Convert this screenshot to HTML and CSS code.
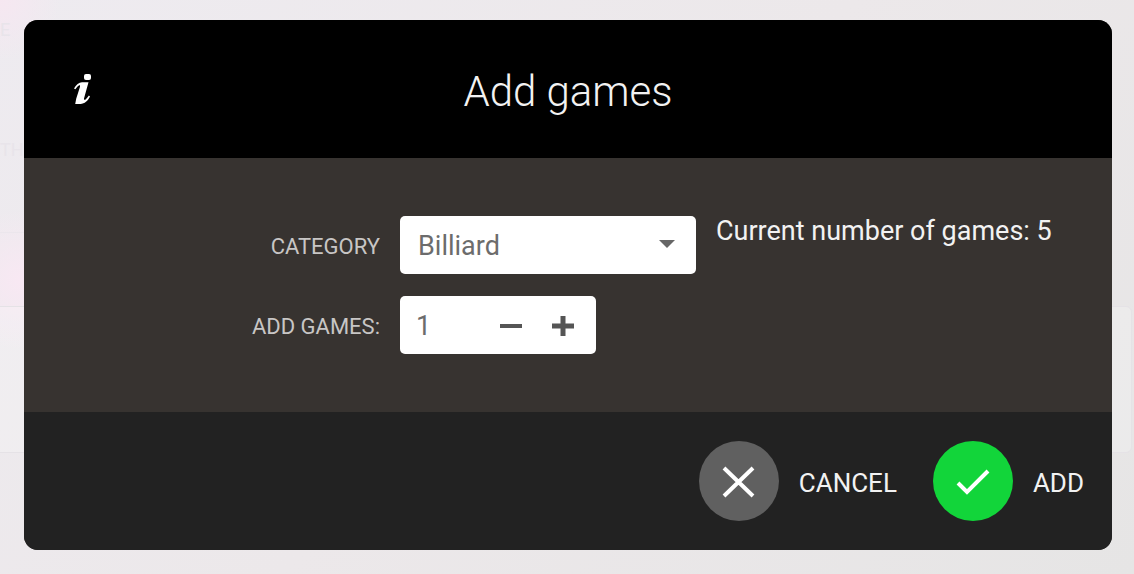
FILE: index.html
```html
<!DOCTYPE html>
<html lang="en">
<head>
  <meta charset="UTF-8" />
  <meta name="viewport" content="width=device-width, initial-scale=1.0" />
  <title>Add games</title>
  <link rel="stylesheet" href="styles.css">
</head>
<body>
  <div class="backdrop" aria-hidden="true">
    <span class="ghost">E</span>
    <span class="ghost">TH</span>
    <div class="ghost-row"></div>
    <div class="ghost-card"></div>
  </div>

  <form class="modal" role="dialog" aria-labelledby="modal-title">
    <header class="modal-header">
      <svg class="info-icon" viewBox="0 0 18 32" aria-hidden="true">
        <rect x="10" y="1" width="7" height="6" rx="2" />
        <path d="M0 15.5C2 11.5 5 9.5 8 9.2H14.5L10 25.5C9.8 27 10.6 27.2 11.6 26.4C12.9 25.4 13.9 24 14.9 22.6L16 23.6C14 28 10.5 31 6.5 31H1.2L2.2 25.8L6 13.8C6.3 12.4 5.8 12 4.8 12.5C3.4 13.4 2.4 14.8 1.4 16.2Z" />
      </svg>
      <h1 class="modal-title" id="modal-title">Add games</h1>
    </header>

    <div class="modal-body">
      <label class="label" for="category">CATEGORY</label>
      <div class="select">
        <select id="category">
          <option>Billiard</option>
        </select>
        <svg class="select-arrow" viewBox="0 0 16 8" aria-hidden="true"><path d="M0 0H16L8 8Z" /></svg>
      </div>
      <p class="current">Current number of games: 5</p>

      <label class="label" for="count">ADD GAMES:</label>
      <div class="stepper">
        <input id="count" type="number" min="1" value="1">
        <button type="button" aria-label="Remove one" onclick="count.stepDown()">
          <svg viewBox="0 0 22 22"><path d="M0 11H22" stroke-width="4" /></svg>
        </button>
        <button type="button" aria-label="Add one" onclick="count.stepUp()">
          <svg viewBox="0 0 22 22"><path d="M0 11H22M11 1V21" stroke-width="5" /></svg>
        </button>
      </div>
    </div>

    <footer class="modal-footer">
      <button class="action" type="button">
        <span class="circle cancel">
          <svg viewBox="0 0 80 80"><path d="M25 27L54 55M54 27L25 55" stroke-width="4" /></svg>
        </span>
        <span class="action-text">CANCEL</span>
      </button>
      <button class="action" type="button">
        <span class="circle add">
          <svg viewBox="0 0 80 80"><path d="M25 42L34 51L55 30" stroke-width="4" /></svg>
        </span>
        <span class="action-text">ADD</span>
      </button>
    </footer>
  </form>
</body>
</html>
```
FILE: styles.css
```css
* {
  box-sizing: border-box;
}
body {
  margin: 0;
  min-height: 100vh;
  padding: 20px 22px 24px 24px;
  font-family: Roboto, "Liberation Sans", sans-serif;
  background:
    radial-gradient(circle at 0 0, #f6e7f1, transparent 60px),
    radial-gradient(circle at 20px 280px, #f8e8f3, transparent 70px),
    linear-gradient(135deg, #eeebf0, #ece8ea 50%, #e6e5e5);
}

/* page behind the dialog */
.backdrop {
  position: absolute;
  inset: 0;
  overflow: hidden;
}
.ghost {
  position: absolute;
  top: 20px;
  left: 0;
  font-size: 18px;
  line-height: 20px;
  color: #e8e4ea;
}
.ghost + .ghost {
  top: 140px;
}
.ghost-row {
  position: absolute;
  top: 232px;
  left: 0;
  width: 50%;
  height: 75px;
  border-top: 1px solid #ebe6ec;
}
.ghost-card {
  position: absolute;
  top: 306px;
  left: -10px;
  right: 2px;
  height: 147px;
  border: 1px solid #e5e2e6;
  border-radius: 6px;
  background: rgba(255, 255, 255, 0.2);
}

.modal {
  position: relative;
  border-radius: 14px;
  overflow: hidden;
  color: #f2f2f2;
  background: #373330;
}
.modal-header {
  display: grid;
  grid-template-columns: 1fr auto 1fr;
  align-items: center;
  height: 138px;
  padding: 0 50px;
  background: #000;
}
.info-icon {
  width: 18px;
  height: 32px;
  fill: #fff;
}
.modal-title {
  margin: 0;
  padding-top: 6px;
  font-size: 42px;
  font-weight: 300;
  line-height: 48px;
}

.modal-body {
  display: grid;
  grid-template-columns: 1fr 296px 1fr;
  gap: 22px 20px;
  align-items: center;
  padding: 58px 40px 58px 0;
}
.label {
  padding-top: 3px;
  text-align: right;
  font-size: 22px;
  line-height: 28px;
  color: #c8c6c5;
}
.current {
  align-self: start;
  margin: 0;
  font-size: 27px;
  line-height: 30px;
  white-space: nowrap;
}
.select {
  position: relative;
}
.select select {
  width: 100%;
  height: 58px;
  padding: 2px 18px 0;
  border: 0;
  border-radius: 5px;
  appearance: none;
  font: 27px Roboto, "Liberation Sans", sans-serif;
  color: #6c6c6c;
  background: #fff;
}
.select-arrow {
  position: absolute;
  top: 24px;
  right: 21px;
  width: 16px;
  height: 8px;
  fill: #666;
  pointer-events: none;
}
.stepper {
  display: flex;
  width: 196px;
  height: 58px;
  padding-right: 7px;
  border-radius: 5px;
  background: #fff;
}
.stepper input {
  flex: 1;
  min-width: 0;
  padding: 2px 0 0 16px;
  border: 0;
  appearance: textfield;
  font: 27px Roboto, "Liberation Sans", sans-serif;
  color: #6c6c6c;
  background: none;
}
.stepper input::-webkit-inner-spin-button {
  appearance: none;
}
.stepper button {
  display: grid;
  place-items: center;
  width: 52px;
  padding: 2px 0 0;
  border: 0;
  background: none;
  cursor: pointer;
}
.stepper svg {
  width: 22px;
  height: 22px;
  stroke: #555;
}

.modal-footer {
  display: flex;
  align-items: center;
  justify-content: flex-end;
  gap: 36px;
  height: 138px;
  padding: 0 28px;
  background: #222;
}
.action {
  display: flex;
  align-items: center;
  gap: 20px;
  padding: 0;
  border: 0;
  font: 26px Roboto, "Liberation Sans", sans-serif;
  color: #f2f2f2;
  background: none;
  cursor: pointer;
}
.action-text {
  padding-top: 4px;
}
.circle {
  width: 80px;
  height: 80px;
  border-radius: 50%;
}
.circle svg {
  display: block;
  fill: none;
  stroke: #fff;
}
.cancel {
  background: #606060;
}
.add {
  background: #12d53a;
}
```
